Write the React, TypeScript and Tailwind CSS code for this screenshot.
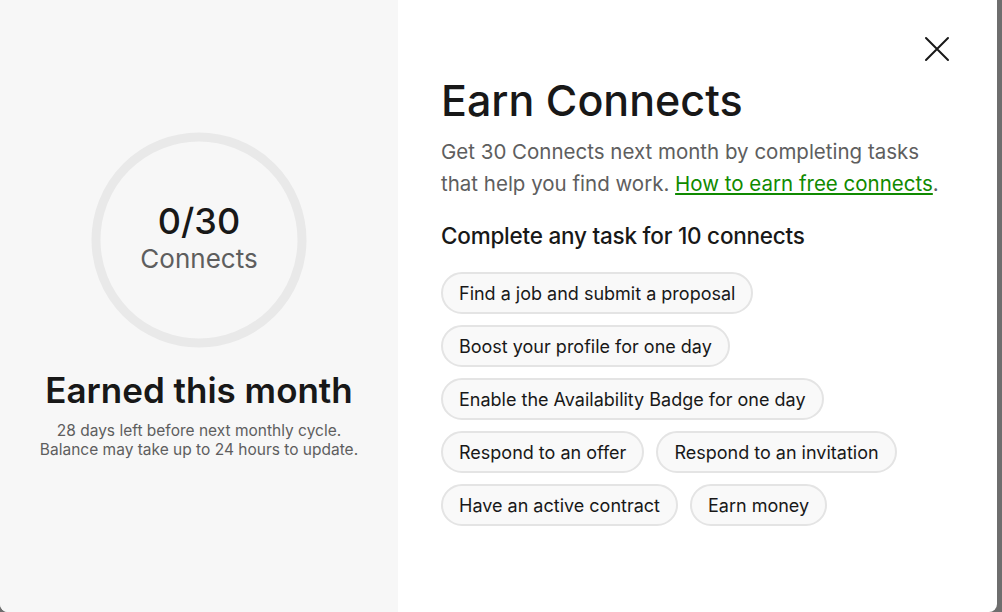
import React from 'react';

const tasks: string[][] = [
  ['Find a job and submit a proposal'],
  ['Boost your profile for one day'],
  ['Enable the Availability Badge for one day'],
  ['Respond to an offer', 'Respond to an invitation'],
  ['Have an active contract', 'Earn money'],
];

function ProgressRing() {
  return (
    <div className="relative w-[216px] h-[216px]">
      <svg width="216" height="216" viewBox="0 0 216 216" className="absolute inset-0">
        <circle cx="108" cy="108" r="103" fill="none" stroke="#e9e9e9" strokeWidth="9" />
      </svg>
      <div className="absolute inset-0 flex flex-col items-center justify-center pb-[4px]">
        <span className="text-[36px] leading-[42px] font-medium text-[#181818]">0/30</span>
        <span className="text-[26px] leading-[34px] text-[#5e5e5e]">Connects</span>
      </div>
    </div>
  );
}

export default function App() {
  return (
    <div
      className="w-[1002px] h-[612px] bg-[#6e6e6e] overflow-hidden"
      style={{ fontFamily: 'Inter, "Liberation Sans", Arial, sans-serif' }}
    >
      <div className="w-[997px] h-[612px] flex bg-white rounded-b-lg overflow-hidden">
        {/* Left: progress */}
        <div className="w-[398px] shrink-0 bg-[#f7f7f7] flex flex-col items-center pt-[132px]">
          <ProgressRing />
          <h2 className="mt-[20px] text-[35px] leading-[44px] font-semibold text-[#181818]">
            Earned this month
          </h2>
          <p className="mt-[9px] text-[15.5px] leading-[19px] text-[#5e5e5e] text-center">
            28 days left before next monthly cycle.
            <br />
            Balance may take up to 24 hours to update.
          </p>
        </div>

        {/* Right: tasks */}
        <div className="relative flex-1 pl-[43px] pr-[40px] pt-[74px]">
          <button className="absolute top-[36px] right-[47px] w-[26px] h-[26px] flex items-center justify-center text-[#181818]">
            <svg width="26" height="26" viewBox="0 0 26 26" fill="none" stroke="currentColor" strokeWidth="2" strokeLinecap="round">
              <path d="M2 2 L24 24 M24 2 L2 24" />
            </svg>
          </button>
          <h1 className="text-[43px] leading-[52px] font-medium text-[#181818]">Earn Connects</h1>
          <p className="mt-[10px] text-[20.5px] leading-[32px] text-[#5e5e5e]">
            Get 30 Connects next month by completing tasks
            <br />
            that help you find work.{' '}
            <a href="#" className="text-[#108a00] underline underline-offset-2">
              How to earn free connects
            </a>
            .
          </p>
          <h3 className="mt-[21px] text-[22.5px] leading-[30px] font-medium tracking-[-0.01em] text-[#181818]">
            Complete any task for 10 connects
          </h3>
          <div className="mt-[21px] flex flex-col gap-[11px]">
            {tasks.map((row, i) => (
              <div key={i} className="flex gap-[12px]">
                {row.map((t) => (
                  <span
                    key={t}
                    className="h-[42px] px-[16px] flex items-center rounded-full border-2 border-[#e4e4e4] bg-[#f9f9f9] text-[18px] text-[#181818]"
                  >
                    {t}
                  </span>
                ))}
              </div>
            ))}
          </div>
        </div>
      </div>
    </div>
  );
}
